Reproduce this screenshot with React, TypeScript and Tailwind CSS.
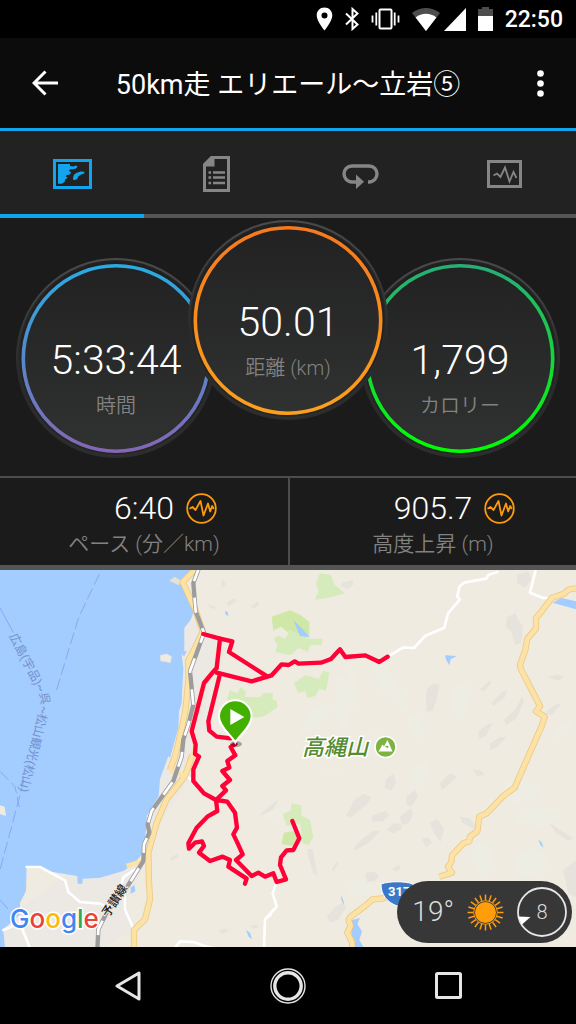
import { useState } from "react";

const TABS = [
  { id: "map", label: "マップ" },
  { id: "details", label: "詳細" },
  { id: "laps", label: "ラップ" },
  { id: "charts", label: "グラフ" },
];

const DIALS = [
  { id: "time", value: "5:33:44", label: "時間", from: "#29abe2", to: "#8466b5", front: false },
  { id: "distance", value: "50.01", label: "距離 (km)", from: "#f7791e", to: "#fca01c", front: true },
  { id: "calories", value: "1,799", label: "カロリー", from: "#27ae76", to: "#00ff00", front: false },
];

const METRICS = [
  { id: "pace", value: "6:40", label: "ペース (分／km)" },
  { id: "ascent", value: "905.7", label: "高度上昇 (m)" },
];

// hillshade on the map, darker and lighter patches
const SHADE_DARK = [
  "M668 28l10 14-8 12-6-14z",
  "M680 98l24-14 4 12-22 12z",
  "M752 110l22-16 4 8-14 14z",
  "M626 102l22 10-6 6-14-8z",
  "M1024 38l34-8 4 12-20 16-20-10z",
  "M1550 14l36-10 8 24-20 26-22-14z",
  "M1520 142l26-12 8 18 14 20-4 50-18 8-12-40-16-16z",
  "M1282 356l20-16 16 6-6 36-14 40-18 4-2-44z",
  "M1475 400l30-34 16-6-8 24-34 24z",
  "M1512 450l34-32 20-38 6 16-24 50-30 20z",
  "M1434 486l26-22 18-6-20 38-20 10z",
  "M1470 520l30-18 20-2-28 30-22 12z",
  "M1642 322l30-8 20 6-18 12z",
  "M1440 358l30-26 4 8-22 24z",
  "M1632 430l30-24 24-6-30 34z",
  "M1158 630l22-20 8 26-14 26-20-8z",
  "M1062 690l30-18 22 10-12 20-50 40-14-4z",
  "M1038 736l24-26 4 14-18 16z",
  "M1062 830l26-24 30-22 22 0-38 38-38 20z",
  "M1118 736l40-14 10 16-22 16-30 0z",
  "M1160 780l20-20 22 2 4 14-26 14z",
  "M1220 680l26-20 8 22-22 28-14-8z",
  "M1200 742l32-28 8 14-12 30-22 6z",
  "M1290 760l20-14 22 30-10 40-20-26z",
  "M1320 640l30-30 20 10-30 30-16 10z",
  "M1266 806l18-4 12 16-18 14z",
  "M1380 740l28 4 20 24-10 8-30-18z",
  "M1420 600l24 2 10 12-22 4z",
  "M922 838l16 0 8 40 6 40-12-10-14-44z",
  "M994 900l16-24 4 2-12 26z",
  "M1096 910l22-6 18 12-8 16-26 4z",
  "M1176 896l20-12 6 12-12 10z",
  "M980 1040l20-24 26-18 12 12-22 38-24 10z",
  "M780 734l28-26 26-18-14 28-34 18z",
  "M510 866l20-14 6 6-20 14z",
  "M654 1082l20-6 14 6-22 10z",
  "M752 1068l14-4 10 8-18 4z",
  "M1650 760l30 20 40 24-14 8-40-24z",
  "M1690 900l38-30 0 110-24-10z",
];

const SHADE_LIGHT = [
  "M1040 290l20 10 8 70 10 60-24-10-8-50z",
  "M1008 320l24-6 14 60-6 110-22-6-14-70z",
  "M1116 300l14-30 30 2 16 50 30 40 14 60-30-20-40-30z",
  "M1360 360l30-20 24 14-10 50-24 50-26-30z",
  "M930 420l40-24 30 10-26 40-60 50-20-4z",
  "M1220 430l40 10 14 70-16 20-20-40z",
  "M1120 480l30 20 20 40-20 30-40-30z",
  "M1240 600l40-30 10 30-30 50-34 10z",
  "M1500 640l60-20 60 30-20 40-70 10z",
  "M1560 720l80-10 40 30-60 30-70-10z",
  "M1410 850l30-34 30 10 10 60-36 40z",
  "M1540 860l50-30 60 30-20 50-70 10z",
  "M1040 940l60-10 30 20-40 30-50-10z",
  "M960 620l30-20 40-8-30 30z",
  "M780 740l60-30 30 10-50 40z",
  "M1660 480l50-30 10 20-50 40z",
];

const ROUTE = [
  "M610 192L660 206 697 214 687 246 798 317",
  "M660 206L650 294 640 305 612 339 575 484 587 524 585 552 597 560 580 598 580 633 612 670 648 690",
  "M650 308L755 334 815 316 845 283 866 285 884 274 896 281 963 278 993 267 1020 238 1036 261 1096 256 1138 276 1163 260",
  "M660 312L625 454 628 482 650 500 692 505",
  "M706 522L692 531 706 556 682 573 688 593 667 603 690 630 667 648 678 661 648 690",
  "M648 690L652 723 622 740 590 773 565 820 567 836 585 818 606 814 612 828 597 848 630 873 668 860 690 870 685 890 740 926 735 941",
  "M648 690L682 695 705 728 711 773 700 793 712 818 728 853 708 870 755 918 775 908 795 920 820 910 830 936 858 928 840 885 843 862 860 841 880 840 898 805 877 753",
];

const RAIL =
  "M597 -6L580 39 587 124 612 189 570 304 580 404 565 464 550 509 545 560 520 633 455 723 443 763 448 788 432 823 430 873 380 953 320 1028 295 1078 292 1140";

function StatusBar() {
  return (
    <div className="flex h-[38px] items-center justify-end gap-3 bg-black pr-[13px] text-white">
      <svg className="h-[24px] w-[17px]" viewBox="0 0 17 24" fill="currentColor">
        <path
          fillRule="evenodd"
          d="M8.5 .5C4 .5.7 4 .7 8.3c0 6 7.8 15.2 7.8 15.2s7.8-9.2 7.8-15.2C16.3 4 13 .5 8.5 .5zm0 4.9a3 3 0 1 1 0 6 3 3 0 0 1 0-6z"
        />
      </svg>
      <svg className="h-[24px] w-[14px]" viewBox="0 0 14 24" fill="none" stroke="currentColor" strokeWidth="2">
        <path d="M1 6.5L12.5 17.5 7.5 22V2L12.5 6.5 1 17.5" />
      </svg>
      <svg className="h-[22px] w-[29px]" viewBox="0 0 29 22" fill="none" stroke="currentColor" strokeWidth="2">
        <rect x="8.5" y="1.5" width="12" height="19" rx="1" />
        <path strokeWidth="1.8" d="M5.3 4.5v13M1.5 7.5v7M23.7 4.5v13M27.5 7.5v7" />
      </svg>
      <div className="flex gap-1">
        <svg className="h-[23px] w-[28px]" viewBox="0 0 28 23">
          <path fill="#4d4d4d" d="M0 5C8-1.7 20-1.7 28 5L14 23z" />
          <path fill="#fff" d="M3.6 9.5c6-5 14.8-5 20.8 0L14 23z" />
        </svg>
        <svg className="h-[23px] w-[22px]" viewBox="0 0 22 23">
          <path fill="#fff" d="M22 0v23H0z" />
        </svg>
      </div>
      <svg className="h-[24px] w-[15px]" viewBox="0 0 15 24">
        <path fill="#4d4d4d" d="M4 0h7v2h4v8H0V2h4z" />
        <path fill="#fff" d="M0 9h15v15H0z" />
      </svg>
      <span className="pt-[2px] text-[23px] leading-[28px] font-medium">22:50</span>
    </div>
  );
}

function Pulse({ className }: { className: string }) {
  return (
    <svg className={className} viewBox="0 0 31 31" fill="none" stroke="#fb9a0c">
      <circle cx="15.5" cy="15.5" r="14.3" strokeWidth="1.8" />
      <path strokeWidth="1.8" strokeLinejoin="round" d="M3.5 15.8L6.5 14l3 3L14.5 8l3 14.5 4.5-12 2.2 8 2-5.5 1.6 3" />
    </svg>
  );
}

function TabIcon({ id }: { id: string }) {
  if (id === "map") {
    return (
      <svg className="h-[30px] w-[39px]" viewBox="0 0 39 30">
        <rect x="1.5" y="1.5" width="36" height="27" fill="none" stroke="currentColor" strokeWidth="3" />
        <path
          fill="currentColor"
          d="M5 5h12v2l3.500.4 2.500-1 1.500 1.400-1.500 1.600-3 .8-3 .1-1 1.600 2 1.300-1 2.200-3.500.5-.7 1.700 2 1-2.800 2.200-.2 2-3 2H5z"
        />
        <path fill="currentColor" d="M20 20c0-3 1-5.500 4-6.300l3.500-1.200 4 .2-.3 1.900-3 1-2.700 1.600-1.500 3-3.200 1z" />
      </svg>
    );
  }
  if (id === "details") {
    return (
      <svg className="h-[36px] w-[27px]" viewBox="0 0 27 36">
        <path fill="none" stroke="currentColor" strokeWidth="3" d="M9 1.5h16.5v33h-24V9z" />
        <path fill="currentColor" d="M8 0h3.5v10.5H0V8z" />
        <path stroke="currentColor" strokeWidth="2.6" d="M5.500 16.5h2.6M10 16.5h12M5.500 21.5h2.6M10 21.5h12M5.500 27h2.6M10 27h12" />
      </svg>
    );
  }
  if (id === "laps") {
    return (
      <svg className="h-[30px] w-[37px]" viewBox="0 -4 37 30">
        <path
          fill="none"
          stroke="currentColor"
          strokeWidth="3.4"
          d="M14 19h-4C5 19 2 15 2 10.800S5 3 10 3h17c5 0 8 3.600 8 7.800S32 19 27 19h-1"
        />
        <path fill="currentColor" d="M14 11.5l8 7.2-8 7.3z" />
      </svg>
    );
  }
  return (
    <svg className="h-[28px] w-[35px]" viewBox="0 0 35 28" fill="none" stroke="currentColor">
      <rect x="1.5" y="1.5" width="32" height="25" strokeWidth="3" />
      <path strokeWidth="1.8" d="M6.5 15.5L10 13.5l3.5 3.5L18 7.5l4.500 14L26.5 12l3 6" />
    </svg>
  );
}

function Dial({ dial }: { dial: (typeof DIALS)[number] }) {
  return (
    <div className={dial.front ? "relative z-10 -mx-[28px] size-[200px]" : "relative mt-[38px] size-[200px]"}>
      <svg className="absolute inset-0 size-full" viewBox="0 0 200 200">
        <defs>
          <linearGradient id={`${dial.id}-ring`} x1="0" y1="0" x2="0" y2="1">
            <stop offset="0" stopColor={dial.from} />
            <stop offset="1" stopColor={dial.to} />
          </linearGradient>
          <linearGradient id={`${dial.id}-face`} x1="0" y1="0" x2="0" y2="1">
            <stop offset="0" stopColor="#222222" />
            <stop offset="1" stopColor="#303131" />
          </linearGradient>
          <linearGradient id={`${dial.id}-rim`} x1="0" y1="0" x2="0" y2="1">
            <stop offset="0" stopColor="#4a4a4a" />
            <stop offset=".6" stopColor="#292929" />
            <stop offset="1" stopColor="#2c2c2c" />
          </linearGradient>
        </defs>
        <circle
          cx="100"
          cy="100"
          r="99"
          fill={`url(#${dial.id}-face)`}
          stroke={`url(#${dial.id}-rim)`}
          strokeWidth="2"
        />
        <circle cx="100" cy="100.5" r="95.5" fill="none" stroke="#1c1c1c" strokeOpacity=".5" strokeWidth="2" />
        <circle
          cx="100"
          cy="100.5"
          r="92.7"
          fill={`url(#${dial.id}-face)`}
          stroke={`url(#${dial.id}-ring)`}
          strokeWidth="3.6"
        />
      </svg>
      <div className="relative flex flex-col items-center pt-[78px]">
        <span className="text-[41px] leading-[48px] font-light text-white">{dial.value}</span>
        <span className="mt-[8px] text-[20px] leading-[28px] font-[350] text-[#828282]">{dial.label}</span>
      </div>
    </div>
  );
}

function RouteMap() {
  return (
    <svg className="block h-auto w-full bg-[#efebe0]" viewBox="0 0 576 377" role="img" aria-label="コース">
      <rect width="576" height="377" fill="#efebe0" />
      <g transform="scale(.33333)" strokeLinejoin="round">
        {SHADE_LIGHT.map((d) => (
          <path key={d} d={d} fill="#eeede4" />
        ))}
        {SHADE_DARK.map((d) => (
          <path key={d} d={d} fill="#e6e2dc" />
        ))}

        {/* built-up strip along the coast */}
        <path
          fill="#ece8e4"
          d="M560 160L585 150 606 186 680 240 640 310 600 480 600 600 560 640 480 760 445 860 380 990 400 1080 300 1140 0 1140 0 1060 220 900 400 850 480 600 540 400z"
        />

        {/* sea */}
        <path
          fill="#a3ccff"
          d="M0 0H580L548 26 584 119 572 149 553 174 553 239 545 252 550 294 545 399 537 424 535 474 510 564 505 558 480 628 476 678 440 738 438 778 428 850 400 883 370 903 300 923 248 926 247 941 233 941 232 918 140 903 120 891 80 888 78 963 60 998 60 1033 10 1078 15 1140 0 1140z"
        />
        <path fill="#efebe0" stroke="#dde0e4" strokeWidth="2" d="M481 256l20-4 14 8-4 18-30-6z" />
        <path fill="#efebe0" d="M0 706l14 4 4 28-18-6z" />
        <path fill="#e7e2cf" d="M508 32l16-12 20 12-8 14z" />
        <path fill="#a3ccff" d="M540 244l20-2-8 18zM675 122l8 4 2 12-8-4zM392 952l12-6 2 18-14 8zM738 1080l12 8 6 20-10-8z" />

        {/* ferry lines */}
        <g fill="none" stroke="#86a9f4" strokeWidth="3">
          <path d="M0 114L40 188" />
          <path strokeDasharray="36 12" d="M298 12L235 145 166 372" />
          <path strokeDasharray="36 12" d="M72 630L0 900M0 604L45 650 58 712M0 990L30 1024" />
        </g>

        {/* woods */}
        <path fill="#cfe8a8" d="M815 140L870 121 900 134 928 155 928 196 880 220 820 182z" />
        <path fill="#d5ebbc" d="M822 205L870 180 930 206 968 206 966 224 930 226 924 246 896 234 872 256 826 246 832 226z" />
        <path fill="#efebe0" d="M822 180l22-10 22 20-12 16-26-14z" />
        <path fill="#d5ebbc" d="M948 40L960 10 992 14 1004 44 1034 70 990 82 944 90 956 64z" />
        <path fill="#d5ebbc" d="M882 340L916 316 956 326 970 302 988 308 978 362 958 356 946 378 922 384 916 364 894 368z" />
        <path fill="#d5ebbc" d="M712 370L722 352 738 366 734 380 780 382 790 370 818 368 818 388 830 392 832 412 790 440 756 444 736 400 680 390 690 360z" />
        <path fill="#d5ebbc" d="M848 732L872 722 874 700 904 706 904 736 930 750 940 800 926 826 908 820 900 760 860 768z" />
        <path fill="#cfe8a8" d="M852 788l30-6 10 20-14 26-34-6z" />

        {/* lakes */}
        <path fill="#a3ccff" d="M880 150L908 178 930 202 900 198zM1336 256l34 2-18 10-4 18-8-14-4-10zM1658 98l26-14 44 10v24z" />
        <path fill="#a3ccff" d="M1056 1050l24-6-8 18 14 22-8 26 14 24-34 6-4-40zM1024 974l8 24 0 6-8-14zM1614 808l12 10 4 16-8-8z" />

        {/* local roads */}
        <g fill="none" stroke="#fff" strokeWidth="8" strokeLinecap="round">
          <path d="M1163 260L1210 232 1242 234 1275 198 1333 173 1344 130 1380 88 1372 80 1378 50 1392 38 1458 26 1466 14 1492 6" />
          <path d="M1607 0L1590 68 1630 84 1655 84" />
          <path d="M80 891L120 891 195 931 205 966 240 996 300 1001 330 1016" />
          <path d="M402 900L370 922 362 950 375 980 375 1018 402 1080" />
          <path d="M10 1080L60 1060 90 1134" />
          <path d="M828 940L818 970 830 1010 795 1048 792 1134M795 1048L812 1034" />
          <path d="M525 1134L540 1114 580 1116 620 1130 660 1140" />
          <path d="M560 618L575 630" />
        </g>

        {/* main roads, casing then fill */}
        <g fill="none" stroke="#ecc983">
          <path strokeWidth="19" d="M590 -6L548 36 584 114 608 184 590 224 564 274 566 324 556 424 541 494 525 560 510 600" />
          <path strokeWidth="19" d="M577 555L555 618 500 688 470 758 445 848 447 938 450 988 435 1048 402 1080 402 1140" />
          <path strokeWidth="19" d="M1728 55L1708 58 1690 72 1655 84 1625 124 1608 144 1608 176 1582 206 1576 240 1560 284 1562 296 1620 408 1608 424 1634 440 1626 466 1580 570 1544 653 1510 678 1460 730 1438 740 1432 784 1410 800 1408 814 1390 820 1356 856 1354 876 1344 890 1356 908 1318 920" />
          <path strokeWidth="19" d="M1180 965L1150 985 1118 988 1100 1004 1050 1042 1046 1050 1052 1068 1042 1088 1056 1116 1058 1140" />
        </g>
        <g fill="none" stroke="#fce2a4">
          <path strokeWidth="14" d="M590 -6L548 36 584 114 608 184 590 224 564 274 566 324 556 424 541 494 525 560 510 600" />
          <path strokeWidth="14" d="M577 555L555 618 500 688 470 758 445 848 447 938 450 988 435 1048 402 1080 402 1140" />
          <path strokeWidth="14" d="M510 602L555 618M440 870L412 878 380 888" />
          <path strokeWidth="15" d="M660 206L650 294 612 339 575 484 587 524 577 560" />
          <path strokeWidth="14" d="M1728 55L1708 58 1690 72 1655 84 1625 124 1608 144 1608 176 1582 206 1576 240 1560 284 1562 296 1620 408 1608 424 1634 440 1626 466 1580 570 1544 653 1510 678 1460 730 1438 740 1432 784 1410 800 1408 814 1390 820 1356 856 1354 876 1344 890 1356 908 1318 920" />
          <path strokeWidth="14" d="M1180 965L1150 985 1118 988 1100 1004 1050 1042 1046 1050 1052 1068 1042 1088 1056 1116 1058 1140" />
        </g>

        {/* railway */}
        <path fill="none" stroke="#9c9c9c" strokeWidth="13" d={RAIL} />
        <path fill="none" stroke="#fff" strokeWidth="8" strokeDasharray="46 50" strokeDashoffset="4" d={RAIL} />

        <g fill="none" stroke="#ff0037" strokeWidth="13" strokeLinecap="round">
          {ROUTE.map((d) => (
            <path key={d} d={d} />
          ))}
        </g>
      </g>

      {/* ferry label runs along the route */}
      <path id="ferry" fill="none" d="M9 66L38 122Q42 130 40 138L18 226" />
      <text fontSize="12" fill="#7391cf">
        <textPath href="#ferry">広島(宇品)~呉~松山観光(松山)</textPath>
      </text>

      <text
        x="118"
        y="333"
        transform="rotate(-57 118 333)"
        textAnchor="middle"
        fontSize="12"
        fontWeight="500"
        fill="#222"
        stroke="#efebe0"
        strokeWidth="2"
        paintOrder="stroke"
      >
        予讃線
      </text>

      <text
        x="302"
        y="185"
        fontSize="22"
        fontStyle="italic"
        fontWeight="500"
        fill="#558b2f"
        stroke="#fff"
        strokeWidth="3"
        paintOrder="stroke"
      >
        高縄山
      </text>
      <circle cx="385.5" cy="177" r="10.5" fill="#7cb342" stroke="#fff" strokeWidth="1.5" />
      <path fill="#fff" d="M378.5 181.5l4-7 1.500 2 3.500-6.500 5 11.500z" />
      <path fill="#7cb342" d="M385 176.5l2.200-1 1.600 1.500-1.500 1z" />

      <path fill="#3b78c8" stroke="#fff" strokeWidth="1" d="M381 314c8-3 24-3 32 0 1 12-6 18-16 22-10-4-16-11-16-22z" />
      <text x="388" y="326" fontSize="13" fontWeight="700" fill="#fff">
        317
      </text>

      {/* start marker */}
      <ellipse cx="236" cy="174" rx="6" ry="3" fill="#000" opacity=".3" />
      <path
        fill="#43b000"
        stroke="#fff"
        strokeWidth="2"
        d="M235.3 172.5C232 166 219 157 219 146.5a16.3 16.3 0 0 1 32.6 0C251.6 157 238.6 166 235.3 172.5z"
      />
      <path fill="#fff" d="M230.3 139v16l14-8z" />

      <text
        fontFamily="Inter, sans-serif"
        x="10"
        y="358"
        fontSize="26"
        fontWeight="500"
        stroke="#fff"
        strokeWidth="3"
        paintOrder="stroke"
      >
        <tspan fill="#4285f4">G</tspan>
        <tspan fill="#ea4335">o</tspan>
        <tspan fill="#fbbc05">o</tspan>
        <tspan fill="#4285f4">g</tspan>
        <tspan fill="#34a853">l</tspan>
        <tspan fill="#ea4335">e</tspan>
      </text>
    </svg>
  );
}

function Sun() {
  const rays = Array.from({ length: 20 }, (_, i) => i * 18);
  return (
    <svg className="size-[37px]" viewBox="-18.5 -18.5 37 37">
      <circle r="10.5" fill="#ff9d0a" />
      <circle r="11.8" fill="none" stroke="#ff9d0a" strokeWidth="1" />
      {rays.map((a) => (
        <path key={a} d="M0 -12V-18" stroke="#ff9d0a" strokeWidth="1.5" transform={`rotate(${a})`} />
      ))}
    </svg>
  );
}

export default function App() {
  const [tab, setTab] = useState("map");

  return (
    <main className="w-full bg-[#1b1b1b] font-[Roboto,'Noto_Sans_CJK_JP',sans-serif]">
      <StatusBar />

      <header className="flex h-[93px] items-center justify-between border-b-[3px] border-[#12a5ee] bg-[#0c0c0c] px-6 text-white">
        <button type="button" aria-label="戻る" className="flex w-10 pl-2">
          <svg className="h-[26px] w-[26px]" viewBox="0 0 26 26" fill="none" stroke="currentColor" strokeWidth="3">
            <path d="M13.5 1.5L2 13l11.5 11.5M2 13h24" />
          </svg>
        </button>
        <h1 className="pt-[3px] text-[27px] leading-[36px]">50km走 エリエール〜立岩⑤</h1>
        <button type="button" aria-label="メニュー" className="flex w-10 justify-end pr-2">
          <svg className="h-[27px] w-[7px]" viewBox="0 0 7 27" fill="currentColor">
            <circle cx="3.5" cy="3.5" r="3.3" />
            <circle cx="3.5" cy="13.5" r="3.3" />
            <circle cx="3.5" cy="23.5" r="3.3" />
          </svg>
        </button>
      </header>

      <nav className="grid grid-cols-4 bg-[#222222]">
        {TABS.map((t) => (
          <button
            key={t.id}
            type="button"
            aria-label={t.label}
            onClick={() => setTab(t.id)}
            className={
              tab === t.id
                ? "flex h-[87px] items-center justify-center border-b-4 border-[#12a5ee] pt-[3px] text-[#12a5ee]"
                : "flex h-[87px] items-center justify-center border-b-4 border-[#555555] pt-[3px] text-[#868686]"
            }
          >
            <TabIcon id={t.id} />
          </button>
        ))}
      </nav>

      <section className="flex justify-center pt-[2px] pb-[18px]">
        {DIALS.map((d) => (
          <Dial key={d.id} dial={d} />
        ))}
      </section>

      <section className="grid grid-cols-2 border-t-2 border-b-5 border-t-[#4d4d4d] border-b-[#555555]">
        {METRICS.map((m) => (
          <div key={m.id} className="flex h-[87px] flex-col border-[#4d4d4d] pt-[10px] last:border-l-2">
            <div className="grid grid-cols-[1fr_auto_1fr] items-center">
              <span className="col-start-2 text-[32px] leading-[40px] font-light text-white">{m.value}</span>
              <Pulse className="ml-[12px] size-[31px]" />
            </div>
            <span className="mt-[2px] text-center text-[21px] leading-[28px] font-[350] text-[#828282]">{m.label}</span>
          </div>
        ))}
      </section>

      <section className="relative">
        <RouteMap />
        <div className="absolute right-1 bottom-1 flex h-[62px] items-center gap-[13px] rounded-full bg-[#373737] pr-[5px] pl-[15px] text-[#dddddd]">
          <span className="text-[28px] leading-[36px] font-light">19°</span>
          <Sun />
          <div className="relative flex size-[50px] items-center justify-center">
            <svg className="absolute inset-0 size-full" viewBox="0 0 50 50">
              <circle cx="25" cy="25" r="24" fill="none" stroke="#e6e6e6" strokeWidth="1.8" />
              <path fill="#fff" d="M1 29.5l12.5.5L5 37.5z" />
            </svg>
            <span className="text-[20px] leading-[24px] font-light">8</span>
          </div>
        </div>
      </section>

      <footer className="flex h-[77px] items-center justify-center bg-black text-[#e6e6e6]">
        <button type="button" aria-label="バック" className="flex w-[160px] justify-center">
          <svg className="h-[30px] w-[26px]" viewBox="0 0 26 30" fill="none" stroke="currentColor">
            <path strokeWidth="3" strokeLinejoin="round" d="M24 2v26L2 15z" />
          </svg>
        </button>
        <button type="button" aria-label="ホーム" className="flex w-[160px] justify-center">
          <svg className="size-[36px]" viewBox="0 0 36 36" fill="none" stroke="currentColor">
            <circle cx="18" cy="18" r="17" strokeWidth="1.4" />
            <circle cx="18" cy="18" r="13.2" strokeWidth="3.4" />
          </svg>
        </button>
        <button type="button" aria-label="アプリ履歴" className="flex w-[160px] justify-center">
          <svg className="size-[27px]" viewBox="0 0 27 27" fill="none" stroke="currentColor">
            <rect x="1.5" y="1.5" width="24" height="24" rx="1" strokeWidth="3" />
          </svg>
        </button>
      </footer>
    </main>
  );
}
